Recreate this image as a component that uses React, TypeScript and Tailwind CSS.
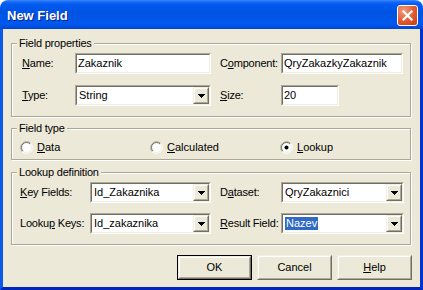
import type { ReactNode } from "react"

function Acc({ text, at }: { text: string; at?: number }) {
  if (at === undefined) return <>{text}</>
  return (
    <>
      {text.slice(0, at)}
      <span className="underline decoration-1 underline-offset-[1px]">{text[at]}</span>
      {text.slice(at + 1)}
    </>
  )
}

// classic 2px sunken edge (text boxes, combos)
function Sunken({ className, children }: { className: string; children: ReactNode }) {
  return (
    <div className={`shrink-0 border border-t-[#ACA899] border-l-[#ACA899] border-r-white border-b-white ${className}`}>
      <div className="flex h-full border border-t-[#716F64] border-l-[#716F64] border-r-[#F1EFE2] border-b-[#F1EFE2] bg-white">
        {children}
      </div>
    </div>
  )
}

// classic raised bevel (buttons)
function Raised({ className, children }: { className: string; children: ReactNode }) {
  return (
    <div className={`shrink-0 border border-t-[#F1EFE2] border-l-[#F1EFE2] border-r-[#716F64] border-b-[#716F64] bg-[#ECE9D8] ${className}`}>
      <div className="flex h-full items-center justify-center border border-t-white border-l-white border-r-[#ACA899] border-b-[#ACA899]">
        {children}
      </div>
    </div>
  )
}

function Arrow() {
  return (
    <svg width="7" height="4" viewBox="0 0 7 4" shapeRendering="crispEdges">
      <rect x="0" y="0" width="7" height="1" fill="#000" />
      <rect x="1" y="1" width="5" height="1" fill="#000" />
      <rect x="2" y="2" width="3" height="1" fill="#000" />
      <rect x="3" y="3" width="1" height="1" fill="#000" />
    </svg>
  )
}

function Label({ className, text, at }: { className: string; text: string; at: number }) {
  return (
    <span className={`shrink-0 whitespace-nowrap tracking-[-0.2px] ${className}`}>
      <Acc text={text} at={at} />
    </span>
  )
}

function TextBox({ className, value }: { className: string; value: string }) {
  return (
    <Sunken className={className}>
      <div className="flex flex-1 items-center whitespace-nowrap pl-[1px]">{value}</div>
    </Sunken>
  )
}

function Combo({ className, value, selected }: { className: string; value: string; selected?: boolean }) {
  return (
    <Sunken className={className}>
      <div className="flex flex-1 items-center whitespace-nowrap pl-[2px]">
        {selected ? <span className="bg-[#316AC5] px-[1px] leading-[13px] text-white">{value}</span> : value}
      </div>
      <Raised className="h-full w-[16px]">
        <Arrow />
      </Raised>
    </Sunken>
  )
}

function Radio({ checked, label, at }: { checked?: boolean; label: string; at: number }) {
  return (
    <div className="flex w-[130px] items-center gap-[4px]">
      <svg width="13" height="13" viewBox="0 0 13 13">
        <circle cx="6.5" cy="6.5" r="5" fill="#fff" />
        <path d="M2.26 10.74A6 6 0 0 1 10.74 2.26" fill="none" stroke="#ACA899" />
        <path d="M10.74 2.26A6 6 0 0 1 2.26 10.74" fill="none" stroke="#fff" />
        <path d="M2.96 10.04A5 5 0 0 1 10.04 2.96" fill="none" stroke="#716F64" />
        <path d="M10.04 2.96A5 5 0 0 1 2.96 10.04" fill="none" stroke="#F1EFE2" />
        {checked && <circle cx="6.5" cy="6.5" r="2" fill="#000" />}
      </svg>
      <span className="whitespace-nowrap">
        <Acc text={label} at={at} />
      </span>
    </div>
  )
}

function Group({ title, className, children }: { title: string; className: string; children: ReactNode }) {
  return (
    <div className={`border border-[#ACA899] shadow-[inset_1px_1px_0_#fff,1px_1px_0_#fff] ${className}`}>
      <div className="-mt-[7px] ml-[5px] w-fit whitespace-nowrap bg-[#ECE9D8] px-[2px] leading-[13px] tracking-[-0.2px]">{title}</div>
      {children}
    </div>
  )
}

function Btn({ label, at, def }: { label: string; at?: number; def?: boolean }) {
  if (def) {
    return (
      <div className="h-[25px] w-[75px] border border-black">
        <Raised className="h-full w-full">
          <span><Acc text={label} at={at} /></span>
        </Raised>
      </div>
    )
  }
  return (
    <Raised className="h-[25px] w-[75px]">
      <span><Acc text={label} at={at} /></span>
    </Raised>
  )
}

export default function App() {
  return (
    <div className="h-[290px] w-[423px] bg-white font-['Liberation_Sans',Arial,sans-serif] text-[11px] text-black">
      <div className="overflow-hidden rounded-t-[8px]">
        {/* Title bar */}
        <div className="flex h-[29px] items-center justify-between bg-[linear-gradient(180deg,#3D8CFF_0px,#1566F7_2px,#0058EE_5px,#0054E3_14px,#0058EE_24px,#0046D6_29px)] pl-[7px] pr-[5px] pt-[2px]">
          <span className="text-[13px] font-bold text-white [text-shadow:1px_1px_0_#0A1E8C]">New Field</span>
          <div className="flex h-[21px] w-[21px] items-center justify-center rounded-[3px] border border-white bg-[radial-gradient(circle_at_30%_25%,#F29A7C,#E2592F_55%,#C23A14)]">
            <svg width="13" height="13" viewBox="0 0 13 13">
              <path d="M2.5 2.5L10.5 10.5M10.5 2.5L2.5 10.5" stroke="#fff" strokeWidth="2.2" strokeLinecap="square" />
            </svg>
          </div>
        </div>

        {/* Body */}
        <div className="flex h-[261px] flex-col border-x-[3px] border-b-[3px] border-l-[#0A5BEB] border-r-[#0033D0] border-b-[#0026C0] bg-[#ECE9D8] pl-[8px] pr-[9px] pt-[14px]">
          <Group title="Field properties" className="h-[74px]">
            <div className="mt-[3px] flex items-center pl-[10px]">
              <Label className="w-[53px]" text="Name:" at={0} />
              <TextBox className="h-[21px] w-[136px]" value="Zakaznik" />
              <Label className="ml-[9px] w-[61px]" text="Component:" at={1} />
              <TextBox className="h-[21px] w-[122px]" value="QryZakazkyZakaznik" />
            </div>
            <div className="mt-[11px] flex items-center pl-[10px]">
              <Label className="w-[53px]" text="Type:" at={0} />
              <Combo className="h-[21px] w-[136px]" value="String" />
              <Label className="ml-[9px] w-[61px]" text="Size:" at={0} />
              <TextBox className="h-[21px] w-[58px]" value="20" />
            </div>
          </Group>

          <Group title="Field type" className="mt-[11px] h-[32px]">
            <div className="mt-[6px] flex h-[13px] items-center pl-[8px]">
              <Radio label="Data" at={0} />
              <Radio label="Calculated" at={0} />
              <Radio label="Lookup" at={0} checked />
            </div>
          </Group>

          <Group title="Lookup definition" className="mt-[12px] h-[73px]">
            <div className="mt-[3px] flex items-center pl-[8px]">
              <Label className="w-[70px]" text="Key Fields:" at={0} />
              <Combo className="h-[21px] w-[121px]" value="Id_Zakaznika" />
              <Label className="ml-[9px] w-[61px]" text="Dataset:" at={1} />
              <Combo className="h-[21px] w-[123px]" value="QryZakaznici" />
            </div>
            <div className="mt-[10px] flex items-center pl-[8px]">
              <Label className="w-[70px]" text="Lookup Keys:" at={5} />
              <Combo className="h-[21px] w-[121px]" value="Id_zakaznika" />
              <Label className="ml-[9px] w-[61px]" text="Result Field:" at={0} />
              <Combo className="h-[21px] w-[123px]" value="Nazev" selected />
            </div>
          </Group>

          <div className="-mr-[1px] mt-[10px] flex justify-end gap-[5px]">
            <Btn label="OK" def />
            <Btn label="Cancel" />
            <Btn label="Help" at={0} />
          </div>
        </div>
      </div>
    </div>
  )
}
